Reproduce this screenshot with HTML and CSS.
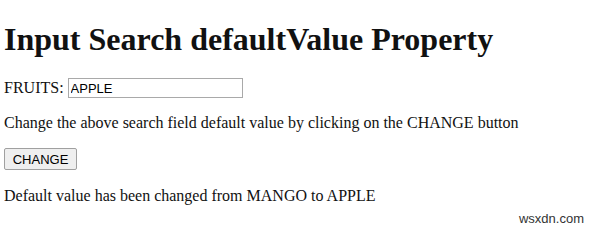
FILE: index.html
```html
<!DOCTYPE html>
<html lang="en">

<head>
    <meta charset="UTF-8">
    <title>Input Search defaultValue Property</title>
    <link rel="stylesheet" href="styles.css">
</head>

<body>
    <h1>Input Search defaultValue Property</h1>
    <div class="field">
        FRUITS: <input type="search" id="SEARCH1" value="APPLE">
    </div>
    <p>Change the above search field default value by clicking on the CHANGE button</p>
    <button onclick="changeDefault()">CHANGE</button>
    <p id="Sample">Default value has been changed from MANGO to APPLE</p>
    <div class="mark">wsxdn.com</div>

    <script>
        function changeDefault() {
            var s = document.getElementById("SEARCH1");
            var old = s.defaultValue;
            s.defaultValue = "APPLE";
            document.getElementById("Sample").innerHTML = "Default value has been changed from " + old + " to " + s.defaultValue;
        }
    </script>
</body>

</html>
```

FILE: styles.css
```css
body {
    font-family: "Liberation Serif", "Times New Roman", serif;
    font-size: 16px;
    margin: 0 4px;
    color: #111;
}

h1 {
    font-size: 32px;
    margin: 21px 0 20px;
}

.field {
    margin-bottom: 16px;
}

input {
    font-family: "Liberation Sans", Arial, sans-serif;
    font-size: 13px;
    width: 175px;
    height: 20px;
    box-sizing: border-box;
    padding: 1px 2px;
    border: 1px solid #a9a9a9;
}

button {
    font-family: "Liberation Sans", Arial, sans-serif;
    font-size: 13px;
    width: 73px;
    height: 22px;
    padding: 0;
    background-color: #efefef;
    border: 1px solid #a0a0a0;
    border-radius: 2px;
}

#Sample {
    margin: 17px 0 6px;
}

.mark {
    text-align: right;
    font-family: "Liberation Sans", Arial, sans-serif;
    font-size: 13px;
    color: #333;
    margin-right: 12px;
}
```
